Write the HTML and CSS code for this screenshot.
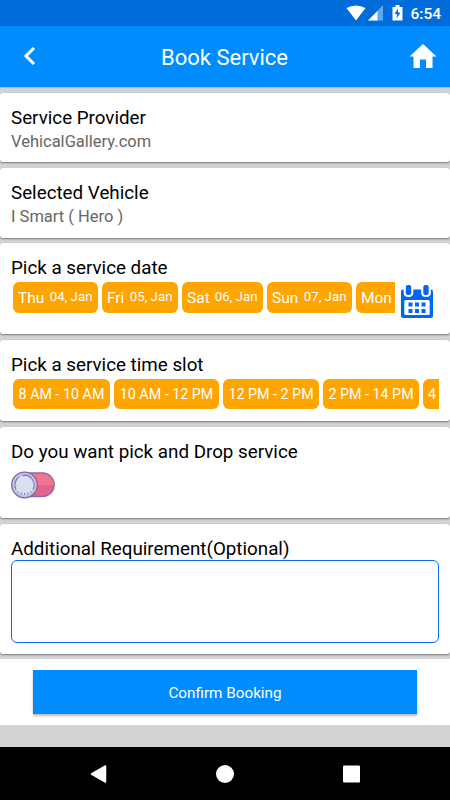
FILE: index.html
```html
<!DOCTYPE html>
<html lang="en">
<head>
<meta charset="utf-8">
<title>Book Service</title>
<link rel="stylesheet" href="styles.css">
</head>
<body>
<div class="status">
  <svg width="64" height="18" viewBox="0 0 64 18">
    <path d="M.5 3Q10-2 19.500 3L10 15.500Z" fill="#fff"/>
    <path d="M37 0V15.500H22Z" fill="#5ca8f1"/>
    <path d="M31.500 6V15.500H22Z" fill="#fff"/>
    <path d="M46.500 2H49.500V0H53.500V2H56.500V15.500H46.500Z" fill="#fff"/>
    <path d="M52 3.500L48.500 9H51L50.500 13.500L54.500 7.500H52Z" fill="#006cd9"/>
  </svg>
  <span>6:54</span>
</div>
<header class="bar">
  <svg width="20" height="22" viewBox="0 0 20 22"><path d="M14 3L6 11L14 19" fill="none" stroke="#fff" stroke-width="3"/></svg>
  <h1>Book Service</h1>
  <svg width="28" height="24" viewBox="0 0 28 24"><path d="M14 0L27.500 12.500H23.500V24H17V15.500H11V24H4.500V12.500H.5Z" fill="#fff"/></svg>
</header>
<main>
  <section class="card provider"><h2>Service Provider</h2><p>VehicalGallery.com</p></section>
  <section class="card vehicle"><h2>Selected Vehicle</h2><p>I Smart ( Hero )</p></section>
  <section class="card date">
    <h2>Pick a service date</h2>
    <div class="picker">
      <div class="chips dates">
        <div class="chip thu">Thu <small>04, Jan</small></div>
        <div class="chip fri">Fri <small>05, Jan</small></div>
        <div class="chip sat">Sat <small>06, Jan</small></div>
        <div class="chip sun">Sun <small>07, Jan</small></div>
        <div class="chip mon">Mon</div>
      </div>
      <svg class="calendar" width="32" height="34" viewBox="0 0 32 34">
        <rect y="4.500" width="32" height="28.500" rx="2" fill="#0068f0"/>
        <path d="M2.700 0H12.300V8Q12.300 12 7.500 12T2.700 8ZM20.200 0H29.800V8Q29.800 12 25 12T20.200 8Z" fill="#fff"/>
        <rect x="4.800" y="0" width="5.400" height="10" rx="2" fill="#0068f0"/>
        <rect x="22.300" y="0" width="5.400" height="10" rx="2" fill="#0068f0"/>
        <rect x="3.300" y="15" width="25.400" height="15" rx="1.500" fill="#fff"/>
        <path d="M7.500 17.500h4v4h-4zM14 17.500h4v4h-4zM20.500 17.500h4v4h-4zM7.500 24h4v4h-4zM14 24h4v4h-4zM20.500 24h4v4h-4z" fill="#0068f0"/>
      </svg>
    </div>
  </section>
  <section class="card time">
    <h2>Pick a service time slot</h2>
    <div class="chips times">
      <div class="chip t1">8 AM - 10 AM</div>
      <div class="chip t2">10 AM - 12 PM</div>
      <div class="chip t3">12 PM - 2 PM</div>
      <div class="chip t4">2 PM - 14 PM</div>
      <div class="chip t5">4</div>
    </div>
  </section>
  <section class="card drop">
    <h2>Do you want pick and Drop service</h2>
    <svg width="44" height="28" viewBox="0 0 44 28">
      <path d="M14 2H31.500A11.700 11.700 0 0 1 43.200 14H14Z" fill="#f27493"/>
      <path d="M14 14H43.200A11.700 11.700 0 0 1 31.500 25.500H14Z" fill="#df658c"/>
      <path d="M14 2H31.500A11.700 11.700 0 0 1 31.500 25.500H14" fill="none" stroke="#8d69a2" stroke-width="1.300"/>
      <circle cx="13.500" cy="14" r="12.800" fill="#bcc9e7" stroke="#8965a3" stroke-width="1.300"/>
      <circle cx="13.500" cy="14" r="9.700" fill="#d7dff0"/>
      <path d="M5 18.500A9.800 9.800 0 0 1 8.500 5.600M11 4.500A9.800 9.800 0 0 1 22 18.500" fill="none" stroke="#8c6da7" stroke-width="1.100"/>
      <path d="M7.500 20L6.500 21.500M10.500 21.500L10 23.500M13.500 22V24M16.500 21.500L17 23.500M19.500 20L20.500 21.500" stroke="#8c6da7" stroke-width="1"/>
    </svg>
  </section>
  <section class="card extra">
    <h2>Additional Requirement(Optional)</h2>
    <textarea aria-label="Additional Requirement"></textarea>
  </section>
  <div class="action"><button>Confirm Booking</button></div>
</main>
<nav>
  <svg width="18" height="20" viewBox="0 0 18 20"><path d="M2.500 10L16.500 2V18Z" fill="#fff" stroke="#fff" stroke-width="1.500" stroke-linejoin="round"/></svg>
  <svg width="20" height="20" viewBox="0 0 20 20"><circle cx="10" cy="10" r="9" fill="#fff"/></svg>
  <svg width="18" height="20" viewBox="0 0 18 20"><rect x="1" y="1.500" width="17" height="17" rx="1" fill="#fff"/></svg>
</nav>
</body>
</html>
```
FILE: styles.css
```css
* { box-sizing: border-box; }
body { margin: 0; width: 450px; height: 800px; overflow: hidden; display: flex; flex-direction: column; background: #d3d3d3; color: #000; font-family: Roboto, sans-serif; }
h1, h2, p { margin: 0; font-weight: 400; white-space: nowrap; }
svg { display: block; flex: none; }
.status { height: 26px; flex: none; background: #006cd9; display: flex; justify-content: flex-end; align-items: flex-start; padding: 5px 9px 0 0; color: #fff; font-size: 15.500px; line-height: 18px; font-weight: 500; }
.bar { height: 61px; flex: none; background: #008cff; color: #fff; display: flex; align-items: center; justify-content: space-between; padding: 0 13px 1px 20px; box-shadow: 0 1px 1px #b9b9b9; }
.bar h1 { font-size: 22px; line-height: 28px; padding-top: 3px; }
main { flex: none; height: 660px; padding-top: 6px; display: flex; flex-direction: column; }
.card { flex: none; background: #fff; border-radius: 3px; padding: 13px 11px 0; margin-bottom: 6px; box-shadow: 0 1px 2px #777; }
h2 { font-size: 18.800px; line-height: 24px; }
p { font-size: 16.500px; line-height: 23px; color: #666; }
.provider { height: 69px; }
.vehicle { height: 70px; margin-bottom: 5px; }
.date { height: 91px; }
.time { height: 81px; }
.drop { height: 91px; }
.drop svg { margin-top: 7px; }
.extra { height: 130px; margin-bottom: 5px; }
.picker { display: flex; gap: 6px; }
.chips { display: flex; gap: 4px; padding-left: 2px; overflow: hidden; }
.dates { width: 384px; height: 33px; padding-top: 2px; }
.times { height: 33px; padding-top: 1.500px; }
.chip { flex: none; display: flex; align-items: center; justify-content: space-between; height: 31px; padding: 0 5.500px 0 5px; border-radius: 6px; background: #ffa500; color: #fff; font-size: 15.500px; white-space: nowrap; }
.chip small { font-size: 13.300px; padding-bottom: 3px; }
.thu, .sun { width: 85px; }
.fri { width: 76px; }
.sat { width: 81px; }
.mon { width: 85px; }
.times .chip { justify-content: center; height: 30px; font-size: 14.300px; padding: 1px 0 0; }
.t1 { width: 97px; }
.t3, .t4 { width: 96px; }
.t2 { width: 105px; }
.times .t5 { width: 96px; justify-content: flex-start; padding-left: 5px; }
.calendar { margin-top: 5px; }
textarea { display: block; width: 428px; height: 83px; margin-top: -1px; border: 1px solid #1169f2; border-radius: 6px; background: #fff; resize: none; }
.action { height: 66px; flex: none; background: #fff; padding: 11px 33px; }
button { display: block; width: 384px; height: 44px; padding: 2px 0 0; border: 0; background: #008cff; color: #fff; font: 15.250px Roboto, sans-serif; box-shadow: 0 2px 2px #bbb; }
nav { height: 53px; flex: none; background: #000; display: flex; justify-content: space-between; align-items: center; padding: 0 90px 0 89px; }
```
